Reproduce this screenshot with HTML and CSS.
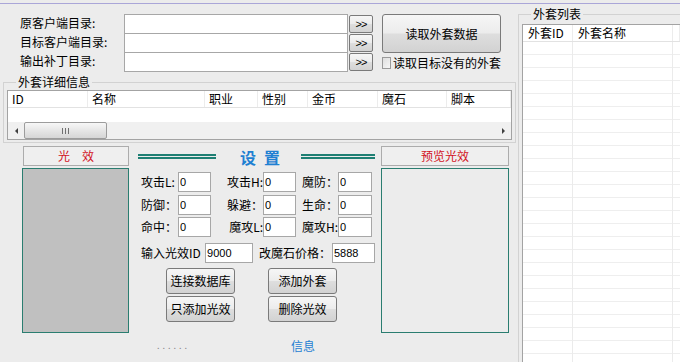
FILE: index.html
```html
<!DOCTYPE html>
<html lang="zh-CN">
<head>
    <meta charset="UTF-8">
    <title>外套补丁工具</title>
    <link rel="stylesheet" href="styles.css">
</head>
<body>
    <div class="topline"></div>
    <div class="app">
        <div class="main">
            <div class="paths">
                <label class="path-label">原客户端目录:</label>
                <input class="path-input" type="text">
                <button class="btn browse">&gt;&gt;</button>
                <button class="btn read-btn">读取外套数据</button>

                <label class="path-label">目标客户端目录:</label>
                <input class="path-input" type="text">
                <button class="btn browse">&gt;&gt;</button>

                <label class="path-label">输出补丁目录:</label>
                <input class="path-input" type="text">
                <button class="btn browse">&gt;&gt;</button>
                <label class="check"><span class="box"></span>读取目标没有的外套</label>
            </div>

            <fieldset class="group details">
                <legend>外套详细信息</legend>
                <div class="list">
                    <div class="list-head">
                        <span>ID</span>
                        <span>名称</span>
                        <span>职业</span>
                        <span>性别</span>
                        <span>金币</span>
                        <span>魔石</span>
                        <span>脚本</span>
                    </div>
                    <div class="list-body"></div>
                    <div class="hscroll">
                        <span class="arrow left"></span>
                        <div class="track">
                            <div class="thumb"><span class="grip"></span></div>
                        </div>
                        <span class="arrow right"></span>
                    </div>
                </div>
            </fieldset>

            <div class="effects">
                <div class="col left-col">
                    <div class="caption">光　效</div>
                    <div class="screen gray"></div>
                </div>

                <div class="settings">
                    <div class="title">
                        <span class="rule first"></span>
                        <span class="title-text">设置</span>
                        <span class="rule last"></span>
                    </div>

                    <div class="fields">
                        <label class="f-label">攻击L:</label>
                        <input class="num" type="text" value="0">
                        <label class="f-label right">攻击H:</label>
                        <input class="num" type="text" value="0">
                        <label class="f-label right">魔防：</label>
                        <input class="num" type="text" value="0">

                        <label class="f-label">防御：</label>
                        <input class="num" type="text" value="0">
                        <label class="f-label right">躲避：</label>
                        <input class="num" type="text" value="0">
                        <label class="f-label right">生命：</label>
                        <input class="num" type="text" value="0">

                        <label class="f-label">命中：</label>
                        <input class="num" type="text" value="0">
                        <label class="f-label right">魔攻L:</label>
                        <input class="num" type="text" value="0">
                        <label class="f-label right">魔攻H:</label>
                        <input class="num" type="text" value="0">
                    </div>

                    <div class="id-row">
                        <label class="id-label">输入光效ID</label>
                        <input class="num id-input" type="text" value="9000">
                        <label class="price-label">改魔石价格：</label>
                        <input class="num price-input" type="text" value="5888">
                    </div>

                    <div class="actions">
                        <button class="btn action">连接数据库</button>
                        <button class="btn action">添加外套</button>
                        <button class="btn action">只添加光效</button>
                        <button class="btn action">删除光效</button>
                    </div>

                    <div class="status">
                        <span class="dots">......</span>
                        <span class="info">信息</span>
                    </div>
                </div>

                <div class="col right-col">
                    <div class="caption">预览光效</div>
                    <div class="screen"></div>
                </div>
            </div>
        </div>

        <fieldset class="group side">
            <legend>外套列表</legend>
            <div class="list">
                <div class="list-head">
                    <span>外套ID</span>
                    <span>外套名称</span>
                    <span></span>
                </div>
                <div class="rows"></div>
            </div>
        </fieldset>
    </div>
</body>
</html>
```

FILE: styles.css
```css
* {
    box-sizing: border-box;
}
body {
    margin: 0;
    width: 680px;
    height: 362px;
    overflow: hidden;
    background: #ececec;
    font-family: "Noto Sans CJK SC", "Liberation Sans", sans-serif;
    font-size: 12px;
    line-height: 14px;
    color: #000;
}
.topline {
    margin-top: 3px;
    height: 1px;
    background: #aaa6d8;
}
.app {
    display: flex;
    align-items: flex-start;
}
.main {
    width: 518px;
    flex: none;
}

/* кнопки */
.btn {
    font: inherit;
    color: #000;
    padding: 0;
    border: 1px solid #7a7a7a;
    border-radius: 3px;
    background: linear-gradient(#f6f6f6 0%, #ececec 48%, #dedede 52%, #d2d2d2 100%);
    cursor: pointer;
}

/* пути */
.paths {
    display: grid;
    grid-template-columns: 104px 225px 24px 9px 119px;
    grid-template-rows: 19px 19px 20px;
    margin: 10px 0 0 20px;
}
.path-label {
    grid-column: 1;
    align-self: center;
    margin-top: -2px;
}
.path-input {
    grid-column: 2;
    width: 224px;
    height: 20px;
    border: 1px solid #a7a7a7;
    background: #fff;
    font: inherit;
}
.browse {
    grid-column: 3;
    height: 18px;
    align-self: center;
    font-family: "Liberation Sans", sans-serif;
    font-size: 11px;
    letter-spacing: -1px;
    border-radius: 2px;
}
.read-btn {
    grid-column: 5;
    grid-row: 1 / span 2;
    height: 39px;
}
.check {
    grid-column: 5;
    grid-row: 3;
    display: flex;
    align-items: center;
    gap: 2px;
    white-space: nowrap;
    margin-top: 1px;
}
.check .box {
    width: 12px;
    height: 12px;
    border: 1px solid #9a9a9a;
    background: linear-gradient(135deg, #dedede, #f7f7f7);
}

/* группы */
.group {
    margin: 0;
    border: 1px solid #d2d2d2;
    min-width: 0;
}
.group legend {
    margin-left: 9px;
    padding: 0 2px;
    line-height: 14px;
}
.details {
    width: 513px;
    margin: 3px 0 0 3px;
    padding: 1px 3px 2px 3px;
}
.list {
    border: 1px solid #a3a3a3;
    background: #fff;
}
.list-head {
    display: grid;
    height: 17px;
    border-bottom: 1px solid #e2e2e2;
}
.list-head span {
    padding-left: 4px;
    line-height: 16px;
    border-right: 1px solid #ececec;
    white-space: nowrap;
}
.details .list-head {
    grid-template-columns: 80px 117px 53px 50px 70px 69px 1fr;
}
.list-body {
    height: 14px;
}
.hscroll {
    display: flex;
    height: 17px;
    background: #f0f0f0;
}
.arrow {
    width: 16px;
    display: flex;
    align-items: center;
    justify-content: center;
}
.arrow::before {
    content: "";
    border: 3px solid transparent;
}
.arrow.left::before {
    border-left-width: 0;
    border-right-color: #404040;
}
.arrow.right::before {
    border-right-width: 0;
    border-left-color: #404040;
}
.track {
    flex: 1;
}
.thumb {
    width: 83px;
    height: 17px;
    border: 1px solid #9c9c9c;
    border-radius: 2px;
    background: linear-gradient(#f7f7f7, #e6e6e6 50%, #d6d6d6);
    display: flex;
    align-items: center;
    justify-content: center;
}
.grip {
    width: 7px;
    height: 6px;
    background: repeating-linear-gradient(90deg, #707070 0 1px, transparent 1px 3px);
}

/* нижняя часть */
.effects {
    display: flex;
    margin-top: 3px;
    padding-left: 22px;
}
.left-col {
    width: 107px;
}
.right-col {
    width: 128px;
}
.caption {
    height: 20px;
    line-height: 18px;
    text-align: center;
    color: #d2121c;
    border: 1px solid #acacac;
    background: #efefef;
}
.left-col .caption {
    margin-left: 1px;
}
.screen {
    margin-top: 2px;
    height: 165px;
    border: 1px solid #2a7d70;
}
.screen.gray {
    background: #c0c0c0;
}
.settings {
    width: 237px;
    margin: 0 6px 0 9px;
}
.title {
    display: flex;
    align-items: center;
    height: 20px;
}
.rule {
    height: 5px;
    border-top: 2px solid #1e7f73;
    border-bottom: 2px solid #1e7f73;
}
.rule.first {
    width: 78px;
    margin-right: 24px;
}
.rule.last {
    width: 74px;
    margin-left: 13px;
}
.title-text {
    font-size: 16px;
    font-weight: bold;
    letter-spacing: 8px;
    color: #1f80d2;
    line-height: 20px;
    margin-top: 2px;
}
.fields {
    display: grid;
    grid-template-columns: 37px 33px 52px 33px 42px 34px;
    grid-auto-rows: 20px;
    row-gap: 2.5px;
    margin-top: 6px;
    padding-left: 3px;
}
.f-label {
    line-height: 20px;
    white-space: nowrap;
}
.f-label.right {
    text-align: right;
}
.num {
    height: 20px;
    width: 100%;
    border: 1px solid #a7a7a7;
    background: #fff;
    padding: 0 1px;
    font: 11px "Liberation Sans", sans-serif;
    color: #000;
}
.id-row {
    display: flex;
    align-items: center;
    height: 20px;
    margin-top: 6px;
    padding-left: 3px;
}
.id-label {
    width: 65px;
}
.id-input {
    width: 48px;
}
.price-label {
    margin-left: 6px;
    width: 74px;
}
.price-input {
    width: 43px;
}
.actions {
    display: grid;
    grid-template-columns: 69px 69px;
    grid-auto-rows: 26px;
    gap: 2px 33px;
    margin-top: 5px;
    padding-left: 28px;
}
.status {
    display: flex;
    margin-top: 17px;
    padding-left: 19px;
}
.dots {
    width: 134px;
    color: #8a8a8a;
    font-size: 9px;
    letter-spacing: 3px;
}
.info {
    color: #1f80d2;
}

/* список справа */
.side {
    width: 162px;
    height: 355px;
    margin-top: 3px;
    padding: 3px 0 0 3px;
    border-right: 0;
    border-bottom: 0;
}
.side .list {
    height: 338px;
    border-right: 0;
    border-bottom: 0;
}
.side .list-head {
    grid-template-columns: 50px 100px 1fr;
}
.side .list-head span {
    padding-left: 5px;
}
.rows {
    height: 320px;
    background-image:
        linear-gradient(90deg, transparent 49px, #ebebeb 49px 50px, transparent 50px 149px, #ebebeb 149px 150px, transparent 150px),
        repeating-linear-gradient(transparent 0 12px, #eeeeee 12px 13px);
}
```
